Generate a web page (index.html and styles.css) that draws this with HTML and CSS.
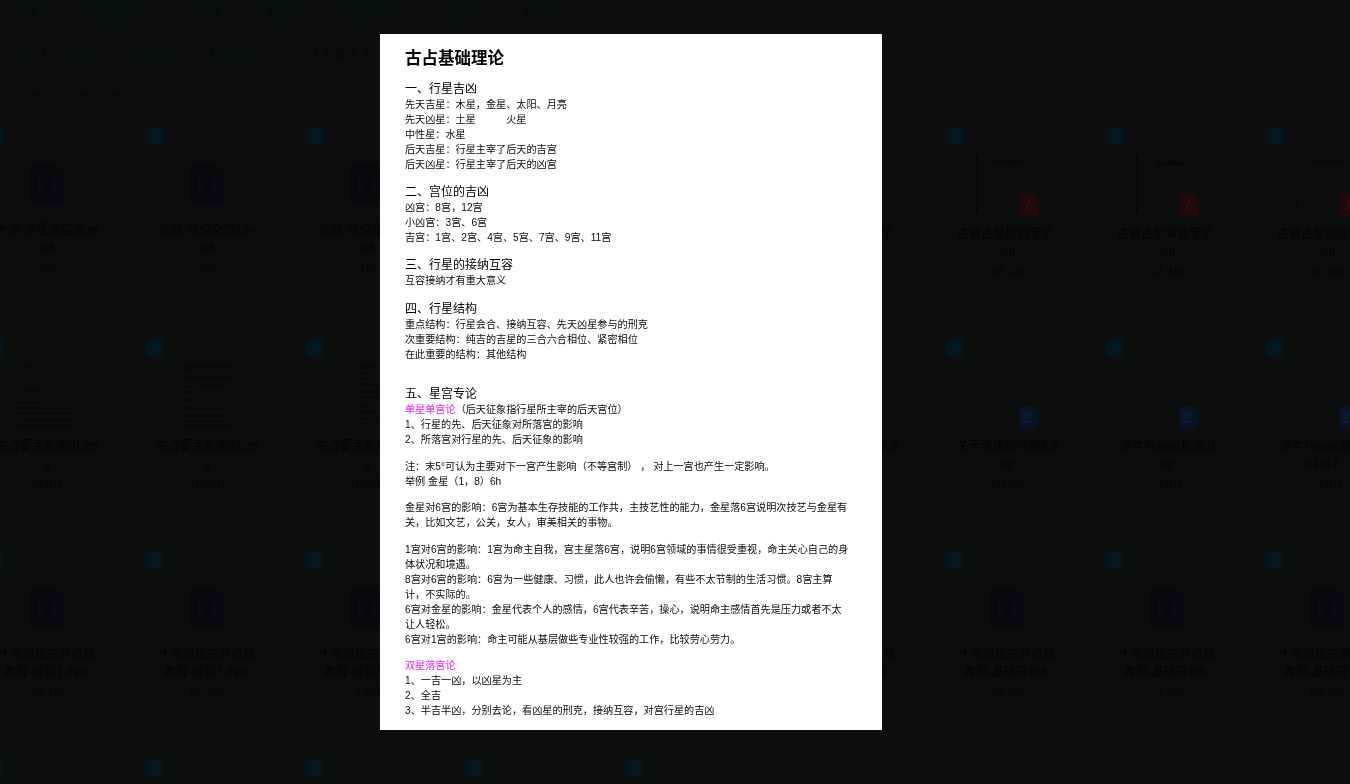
FILE: index.html
```html
<!DOCTYPE html>
<html lang="zh-CN">
<head>
    <meta charset="UTF-8">
    <meta name="viewport" content="width=device-width, initial-scale=1.0">
    <title>古占基础理论</title>
    <link rel="stylesheet" href="styles.css">
</head>
<body>
    <svg class="defs" width="0" height="0">
        <symbol id="audio" viewBox="0 0 34 41">
            <path d="M6 0H23L34 11V35a6 6 0 0 1-6 6H6a6 6 0 0 1-6-6V6a6 6 0 0 1 6-6Z" fill="#09090d"/>
            <path d="M9 25v-6a8 8 0 0 1 16 0v6" fill="none" stroke="#0d0d11" stroke-width="2.4"/>
            <rect x="8" y="23" width="5" height="8" rx="1.5" fill="#0d0d11"/>
            <rect x="21" y="23" width="5" height="8" rx="1.5" fill="#0d0d11"/>
        </symbol>
        <symbol id="pdf-badge" viewBox="0 0 18 21">
            <path d="M2 0H13L18 5V19a2 2 0 0 1-2 2H2a2 2 0 0 1-2-2V2a2 2 0 0 1 2-2Z" fill="#220a0a"/>
            <path d="M4 16C7 13 9 8 8.500 4C8 8 11 13 15 13C11 12 7 14 4 16Z" fill="none" stroke="#321616" stroke-width="1"/>
        </symbol>
        <symbol id="doc-badge" viewBox="0 0 18 21">
            <path d="M2 0H13L18 5V19a2 2 0 0 1-2 2H2a2 2 0 0 1-2-2V2a2 2 0 0 1 2-2Z" fill="#081528"/>
            <path d="M5 6V15H13M9 6V11" fill="none" stroke="#162438" stroke-width="1.200"/>
        </symbol>
        <symbol id="shot-wide" viewBox="0 0 64 64">
            <path d="M4 3H18M4 8H12M3 14H12M4 20H9M4 26H32M4 31H9M3 38H28M3 44H60M3 50H60M3 56H58M3 61H60" stroke="#060606" stroke-width="0.900" fill="none"/>
        </symbol>
        <symbol id="shot-mid" viewBox="0 0 64 64">
            <path d="M5 2H59M5 6H18M5 14H59M5 22H52M5 28H18M5 36H18M5 44H59M5 52H52M5 58H59M5 62H59" stroke="#060606" stroke-width="0.900" fill="none"/>
        </symbol>
        <symbol id="shot-slim" viewBox="0 0 64 64">
            <path d="M26 3H40M24 9H38M24 15H36M24 21H38M24 28H52M24 34H38M24 42H36M24 48H40M24 54H50M24 60H36" stroke="#060606" stroke-width="0.900" fill="none"/>
        </symbol>
        <symbol id="doc-lines" viewBox="0 0 64 64">
            <path d="M10 4H50M10 16H50M10 24H34M10 32H50M10 40H50M10 48H50M10 56H40M10 62H50" stroke="#0a0a0a" stroke-width="1" fill="none"/>
        </symbol>
        <symbol id="check" viewBox="0 0 16 16">
            <rect width="16" height="16" rx="2" fill="#021720"/>
            <path d="M5.500 8l2 2 3-3" fill="none" stroke="#0a2530" stroke-width="1"/>
        </symbol>
    </svg>

    <div class="page">
        <div class="toolbar">
            <span class="tool"><svg class="tool-icon" viewBox="0 0 14 14"><path d="M2 7l10-5-3 10-2-4Z"/></svg>分享</span>
            <span class="tool"><svg class="tool-icon" viewBox="0 0 14 14"><circle cx="7" cy="7" r="5.500"/><path d="M7 4v6M4 7h6"/></svg>磁盘分享</span>
            <span class="tool"><svg class="tool-icon" viewBox="0 0 14 14"><path d="M7 1v8M4 6l3 3 3-3M1 10v3h12v-3"/></svg>下载</span>
            <span class="tool"><svg class="tool-icon tool-icon-thin" viewBox="0 0 10 14"><path d="M1 3h8v10H1ZM0 2h10M4 5v6M6 5v6"/></svg>删除</span>
            <span class="tool"><svg class="tool-icon" viewBox="0 0 14 14"><path d="M1 2h12v9H1ZM5 13h4M7 11v2"/></svg>智能PPT</span>
            <span class="tool"><svg class="tool-icon" viewBox="0 0 14 14"><path d="M2 1h10v12H2ZM4 5h6M4 8h6"/></svg>邮件</span>
            <span class="tool"><svg class="tool-icon" viewBox="0 0 14 14"><path d="M7 1v12M1 7h12M5 3l2-2 2 2"/></svg>移动</span>
            <span class="search">搜索您的</span>
        </div>

        <div class="crumbs">
            <span>上一级</span><span class="sep">|</span>
            <span>全部文件</span><span class="sep">&gt;</span>
            <span>学习资料</span><span class="sep">&gt;</span>
            <span>1-【占星学】</span><span class="sep">&gt;</span>
            <span class="current">095 十弟叙生 古</span>
        </div>

        <div class="count">已加载35 个文件 (文件夹)</div>

        <div class="files">
            <div class="file"><svg class="box"><use href="#check"/></svg><div class="thumb thumb-audio"><svg class="audio-icon"><use href="#audio"/></svg></div><div class="name">补遗-多星落宫论.mp3</div><div class="size">4M</div></div>
            <div class="file"><svg class="box"><use href="#check"/></svg><div class="thumb thumb-audio"><svg class="audio-icon"><use href="#audio"/></svg></div><div class="name">补遗-宫位交感1.mp3</div><div class="size">4M</div></div>
            <div class="file"><svg class="box"><use href="#check"/></svg><div class="thumb thumb-audio"><svg class="audio-icon"><use href="#audio"/></svg></div><div class="name">补遗-宫位交感2.mp3</div><div class="size">1M</div></div>
            <div class="file"><svg class="box"><use href="#check"/></svg></div>
            <div class="file"><svg class="box"><use href="#check"/></svg></div>
            <div class="file"><svg class="box"><use href="#check"/></svg><div class="thumb"></div><div class="name">古典占星财运专论.pdf</div></div>
            <div class="file">
                <svg class="box"><use href="#check"/></svg>
                <div class="thumb">
                    <svg class="preview" viewBox="0 0 64 64">
                        <path class="spine" d="M2 4V60"/>
                        <text x="17" y="12" class="tiny">古典占星婚姻专论</text>
                        <use href="#pdf-badge" x="45" y="43" width="18" height="21"/>
                    </svg>
                </div>
                <div class="name">古典占星婚姻专论.pdf</div><div class="size">26.7M</div>
            </div>
            <div class="file">
                <svg class="box"><use href="#check"/></svg>
                <div class="thumb">
                    <svg class="preview" viewBox="0 0 64 64">
                        <path class="spine" d="M2 4V60"/>
                        <text x="19" y="13" class="tiny">古典占星事业专论</text>
                        <use href="#pdf-badge" x="45" y="43" width="18" height="21"/>
                    </svg>
                </div>
                <div class="name">古典占星事业专论.pdf</div><div class="size">41.1M</div>
            </div>
            <div class="file">
                <svg class="box"><use href="#check"/></svg>
                <div class="thumb">
                    <svg class="preview" viewBox="0 0 64 64">
                        <path class="spine" d="M2 50V58"/>
                        <text x="17" y="11" class="tiny">古典占星流运专论</text>
                        <use href="#pdf-badge" x="45" y="43" width="18" height="21"/>
                    </svg>
                </div>
                <div class="name">古典占星流运专论.pdf</div><div class="size">35.3M</div>
            </div>

            <div class="file"><svg class="box"><use href="#check"/></svg><div class="thumb"><svg class="preview"><use href="#shot-wide"/></svg></div><div class="name">古占要点截图01.png</div><div class="size">95KB</div></div>
            <div class="file"><svg class="box"><use href="#check"/></svg><div class="thumb"><svg class="preview"><use href="#shot-mid"/></svg></div><div class="name">古占要点截图02.png</div><div class="size">108KB</div></div>
            <div class="file"><svg class="box"><use href="#check"/></svg><div class="thumb"><svg class="preview"><use href="#shot-slim"/></svg></div><div class="name">古占要点截图03.png</div><div class="size">108KB</div></div>
            <div class="file"><svg class="box"><use href="#check"/></svg></div>
            <div class="file"><svg class="box"><use href="#check"/></svg></div>
            <div class="file"><svg class="box"><use href="#check"/></svg><div class="thumb"></div><div class="name">关于法达的问题2.doc</div></div>
            <div class="file">
                <svg class="box"><use href="#check"/></svg>
                <div class="thumb"><svg class="preview" viewBox="0 0 64 64"><use href="#doc-lines"/><use href="#doc-badge" x="45" y="43" width="18" height="21"/></svg></div>
                <div class="name">关于法达的问题3.doc</div><div class="size">111KB</div>
            </div>
            <div class="file">
                <svg class="box"><use href="#check"/></svg>
                <div class="thumb"><svg class="preview" viewBox="0 0 64 64"><use href="#doc-lines"/><use href="#doc-badge" x="45" y="43" width="18" height="21"/></svg></div>
                <div class="name">流年Transit看法.d<br>oc</div><div class="size">25KB</div>
            </div>
            <div class="file">
                <svg class="box"><use href="#check"/></svg>
                <div class="thumb"><svg class="preview" viewBox="0 0 64 64"><use href="#doc-lines"/><use href="#doc-badge" x="45" y="43" width="18" height="21"/></svg></div>
                <div class="name">流年Transit看法2-<br>01412...</div><div class="size">25KB</div>
            </div>

            <div class="file"><svg class="box"><use href="#check"/></svg><div class="thumb thumb-audio"><svg class="audio-icon"><use href="#audio"/></svg></div><div class="name">十弟叙生古典占星教程-婚姻1.mp3</div><div class="size">48.1M</div></div>
            <div class="file"><svg class="box"><use href="#check"/></svg><div class="thumb thumb-audio"><svg class="audio-icon"><use href="#audio"/></svg></div><div class="name">十弟叙生古典占星教程-婚姻2.mp3</div><div class="size">85.3M</div></div>
            <div class="file"><svg class="box"><use href="#check"/></svg><div class="thumb thumb-audio"><svg class="audio-icon"><use href="#audio"/></svg></div><div class="name">十弟叙生古典占星教程-婚姻3.mp3</div><div class="size">2.3M</div></div>
            <div class="file"><svg class="box"><use href="#check"/></svg></div>
            <div class="file"><svg class="box"><use href="#check"/></svg></div>
            <div class="file"><svg class="box"><use href="#check"/></svg><div class="thumb thumb-audio"><svg class="audio-icon"><use href="#audio"/></svg></div><div class="name">十弟叙生古典占星教程-基础理论3.</div></div>
            <div class="file"><svg class="box"><use href="#check"/></svg><div class="thumb thumb-audio"><svg class="audio-icon"><use href="#audio"/></svg></div><div class="name">十弟叙生古典占星教程-基础理论4.</div><div class="size">49.2M</div></div>
            <div class="file"><svg class="box"><use href="#check"/></svg><div class="thumb thumb-audio"><svg class="audio-icon"><use href="#audio"/></svg></div><div class="name">十弟叙生古典占星教程-基础理论5.</div><div class="size">71.3M</div></div>
            <div class="file"><svg class="box"><use href="#check"/></svg><div class="thumb thumb-audio"><svg class="audio-icon"><use href="#audio"/></svg></div><div class="name">十弟叙生古典占星教程-基础理论6.</div><div class="size">66.3M</div></div>

            <div class="file"><svg class="box"><use href="#check"/></svg></div>
            <div class="file"><svg class="box"><use href="#check"/></svg></div>
            <div class="file"><svg class="box"><use href="#check"/></svg></div>
            <div class="file"><svg class="box"><use href="#check"/></svg></div>
            <div class="file"><svg class="box"><use href="#check"/></svg></div>
        </div>
    </div>

    <div class="mask">
        <article class="sheet">
            <h1>古占基础理论</h1>

            <h2>一、行星吉凶</h2>
            <p>先天吉星：木星，金星、太阳、月亮</p>
            <p>先天凶星：土星&emsp;&emsp;&emsp;火星</p>
            <p>中性星：水星</p>
            <p>后天吉星：行星主宰了后天的吉宫</p>
            <p>后天凶星：行星主宰了后天的凶宫</p>

            <h2>二、宫位的吉凶</h2>
            <p>凶宫：8宫，12宫</p>
            <p>小凶宫：3宫、6宫</p>
            <p>吉宫：1宫、2宫、4宫、5宫、7宫、9宫、11宫</p>

            <h2>三、行星的接纳互容</h2>
            <p>互容接纳才有重大意义</p>

            <h2 class="wide">四、行星结构</h2>
            <p>重点结构：行星会合、接纳互容、先天凶星参与的刑克</p>
            <p>次重要结构：纯吉的吉星的三合六合相位、紧密相位</p>
            <p>在此重要的结构：其他结构</p>

            <h2 class="far">五、星宫专论</h2>
            <p><span class="pink">单星单宫论</span>（后天征象指行星所主宰的后天宫位）</p>
            <p>1、行星的先、后天征象对所落宫的影响</p>
            <p>2、所落宫对行星的先、后天征象的影响</p>

            <p class="gap">注：末5°可认为主要对下一宫产生影响（不等宫制） ， 对上一宫也产生一定影响。</p>
            <p>举例 金星（1，8）6h</p>

            <p class="gap-tight">金星对6宫的影响：6宫为基本生存技能的工作共，主技艺性的能力，金星落6宫说明次技艺与金星有关，比如文艺，公关，女人，审美相关的事物。</p>

            <p class="gap">1宫对6宫的影响：1宫为命主自我，宫主星落6宫，说明6宫领域的事情很受重视，命主关心自己的身体状况和境遇。</p>
            <p>8宫对6宫的影响：6宫为一些健康、习惯，此人也许会偷懒，有些不太节制的生活习惯。8宫主算<br>计，不实际的。</p>
            <p>6宫对金星的影响：金星代表个人的感情，6宫代表辛苦，操心，说明命主感情首先是压力或者不太<br>让人轻松。</p>
            <p>6宫对1宫的影响：命主可能从基层做些专业性较强的工作，比较劳心劳力。</p>

            <p class="gap-tight pink">双星落宫论</p>
            <p>1、一吉一凶，以凶星为主</p>
            <p>2、全吉</p>
            <p>3、半吉半凶，分别去论，看凶星的刑克，接纳互容，对宫行星的吉凶</p>
        </article>
    </div>
</body>
</html>
```

FILE: styles.css
```css
html, body {
    margin: 0;
    height: 100%;
    overflow: hidden;
}

body {
    background-color: #0c0d0d;
    color: #030303;
    font-family: "Liberation Sans", "Noto Sans CJK SC", sans-serif;
}

.defs {
    display: block;
    height: 0;
}

.page {
    height: 784px;
    overflow: hidden;
    filter: blur(0.4px);
}

.toolbar {
    display: flex;
    align-items: center;
    gap: 27px;
    height: 24px;
    margin-left: -11px;
    font-size: 14px;
    font-weight: 700;
    color: #060d0f;
}

.tool {
    display: flex;
    align-items: center;
    gap: 8px;
    white-space: nowrap;
}

.tool-icon {
    width: 14px;
    height: 14px;
    fill: none;
    stroke: #060d0f;
    stroke-width: 1;
}

.tool-icon-thin {
    width: 10px;
}

.search {
    margin-left: auto;
    width: 50px;
    white-space: nowrap;
    font-size: 11px;
    font-weight: 400;
    color: #0a0b0c;
}

.crumbs {
    display: flex;
    align-items: center;
    height: 18px;
    margin: 20px 0 0 -3px;
    font-size: 12px;
    color: #060d0f;
    white-space: nowrap;
}

.sep {
    width: 21px;
    text-align: center;
    color: #080a0b;
}

.current {
    margin-left: 3px;
    color: #080909;
}

.count {
    height: 18px;
    margin: 26px 0 0 8px;
    font-size: 11.500px;
    line-height: 18px;
    color: #060a0b;
}

.files {
    display: grid;
    grid-template-columns: repeat(9, 160px);
    align-items: start;
    margin: 22px 0 0 -33px;
}

.file {
    position: relative;
    padding: 24px 28.800px 59px;
    text-align: center;
}

.box {
    position: absolute;
    left: 20px;
    top: 0;
    width: 16px;
    height: 16px;
}

.thumb {
    display: flex;
    align-items: center;
    justify-content: center;
    height: 64px;
    margin-bottom: 9px;
}

.thumb-audio {
    height: 60px;
}

.audio-icon {
    width: 34px;
    height: 41px;
}

.preview {
    width: 64px;
    height: 64px;
}

.spine {
    stroke: #000;
    stroke-width: 1;
}

.tiny {
    font-size: 4px;
    fill: #000;
}

.name {
    height: 36px;
    overflow: hidden;
    font-size: 12px;
    line-height: 18px;
    word-break: break-all;
    color: #040404;
}

.size {
    margin-top: 2px;
    font-size: 12px;
    line-height: 18px;
    color: #070707;
}

/* preview layer */
.mask {
    position: fixed;
    top: 34px;
    left: 380px;
}

.sheet {
    box-sizing: border-box;
    width: 502px;
    height: 696px;
    padding: 14px 25px 0;
    overflow: hidden;
    background-color: #fff;
    color: #0a0a0a;
    font-size: 10.150px;
    line-height: 15px;
    filter: blur(0.3px);
}

.sheet h1 {
    margin: 0 0 13px;
    font-size: 16.500px;
    line-height: 20px;
    font-weight: 700;
    color: #000;
}

.sheet h2 {
    margin: 12px 0 0;
    font-size: 12px;
    line-height: 16px;
    font-weight: 400;
    color: #000;
}

.sheet h2.wide {
    margin-top: 13px;
}

.sheet h2.far {
    margin-top: 24px;
}

.sheet p {
    margin: 0;
    width: 448px;
}

.sheet p.gap {
    margin-top: 12px;
}

.sheet p.gap-tight {
    margin-top: 11px;
}

.pink {
    color: #e81fe8;
}
```
